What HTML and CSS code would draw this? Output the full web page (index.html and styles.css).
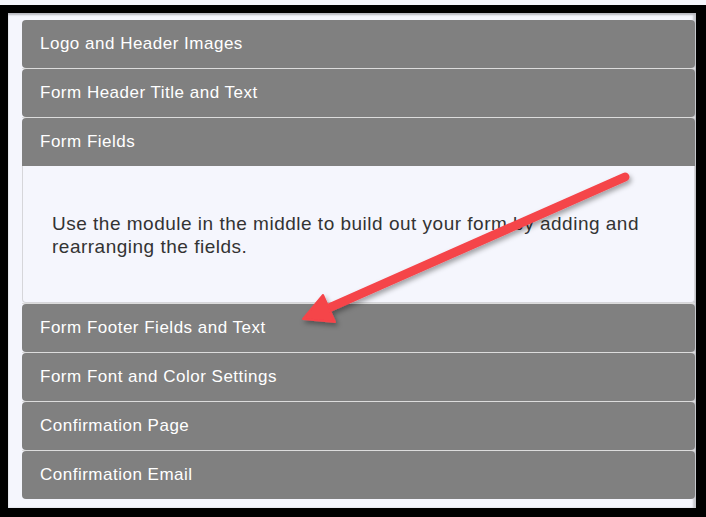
FILE: index.html
```html
<!DOCTYPE html>
<html lang="en">

<head>
  <meta charset="UTF-8">
  <meta name="viewport" content="width=device-width, initial-scale=1.0">
  <title>Form Settings</title>
  <link rel="stylesheet" href="styles.css">
</head>

<body>
  <div class="frame">
    <div class="accordion">
      <div class="item">
        <div class="item-header">Logo and Header Images</div>
      </div>
      <div class="item">
        <div class="item-header">Form Header Title and Text</div>
      </div>
      <div class="item open">
        <div class="item-header">Form Fields</div>
        <div class="item-body">
          <p>Use the module in the middle to build out your form by adding and rearranging the fields.</p>
        </div>
      </div>
      <div class="item">
        <div class="item-header">Form Footer Fields and Text</div>
      </div>
      <div class="item">
        <div class="item-header">Form Font and Color Settings</div>
      </div>
      <div class="item">
        <div class="item-header">Confirmation Page</div>
      </div>
      <div class="item">
        <div class="item-header">Confirmation Email</div>
      </div>
    </div>

    <!-- annotation arrow drawn over the screenshot -->
    <svg class="arrow" width="706" height="517" viewBox="0 0 706 517">
      <defs>
        <filter id="shadow" x="-10%" y="-10%" width="130%" height="130%">
          <feDropShadow dx="2" dy="3" stdDeviation="2.5" flood-color="#000" flood-opacity="0.35" />
        </filter>
      </defs>
      <g filter="url(#shadow)" fill="#f5444a" stroke="#f5444a">
        <line x1="625" y1="177" x2="322" y2="311" stroke-width="9" stroke-linecap="round" />
        <polygon points="303,319 323,295 335,322" stroke-width="2" stroke-linejoin="round" />
      </g>
    </svg>
  </div>
</body>

</html>
```

FILE: styles.css
```css
* {
  margin: 0;
  padding: 0;
  box-sizing: border-box;
}

html,
body {
  height: 100%;
}

body {
  background-color: #f5f6fc;
  padding-top: 5px;
  font-family: "Liberation Sans", Arial, sans-serif;
  overflow: hidden;
}

.frame {
  position: relative;
  height: 512px;
  background-color: #f5f6fd;
  border-style: solid;
  border-color: #000;
  border-width: 8px 10px 9px 8px;
  padding: 7px 1px 0 14px;
  box-shadow: inset 0 2px 2px #b8b9bf, inset -3px 0 2px #c9cad0;
}

.accordion {
  display: flex;
  flex-direction: column;
}

.item {
  border-top: 1px solid #dcdcdc;
}

.item:first-child {
  border-top: none;
}

.item-header {
  height: 48px;
  display: flex;
  align-items: center;
  padding: 0 18px;
  background-color: #808080;
  color: #fff;
  font-size: 17px;
  letter-spacing: 0.5px;
  border-radius: 4px;
}

.open .item-header {
  border-radius: 4px 4px 0 0;
}

.item-body {
  height: 137px;
  display: flex;
  align-items: center;
  padding: 2px 28px 0 29px;
  background-color: #f5f6fd;
  border: 1px solid #d6d6da;
  border-top: none;
  border-radius: 0 0 4px 4px;
}

.item-body p {
  color: #333;
  font-size: 19px;
  letter-spacing: 0.5px;
  line-height: 23.5px;
}

.item:last-child .item-header {
  border-radius: 4px;
}

.arrow {
  position: absolute;
  top: -13px;
  left: -8px;
}
```
